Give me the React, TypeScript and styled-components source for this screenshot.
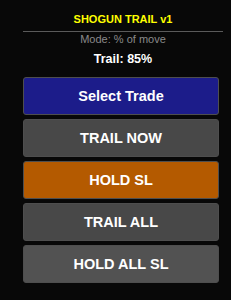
import * as React from 'react'
import styled, { createGlobalStyle } from 'styled-components'

type Tone = 'blue' | 'grey' | 'orange' | 'light'

const tones: Record<Tone, string> = {
  blue: '#1c1c8a',
  grey: '#484848',
  orange: '#b45a00',
  light: '#525252'
}

const buttons: { label: string, tone: Tone }[] = [
  { label: 'Select Trade', tone: 'blue' },
  { label: 'TRAIL NOW', tone: 'grey' },
  { label: 'HOLD SL', tone: 'orange' },
  { label: 'TRAIL ALL', tone: 'grey' },
  { label: 'HOLD ALL SL', tone: 'light' }
]

export default function App () {
  return (
    <>
      <GlobalStyle />
      <Panel>
        <Title>SHOGUN TRAIL v1</Title>
        <Mode>Mode: % of move</Mode>
        <Trail>Trail: 85%</Trail>
        <ButtonList>
          {buttons.map(b => (
            <ActionButton key={b.label} tone={b.tone}>{b.label}</ActionButton>
          ))}
        </ButtonList>
      </Panel>
    </>
  )
}

const GlobalStyle = createGlobalStyle`
  html, body {
    margin: 0;
    padding: 0;
    background: #080808;
  }
  body {
    font-family: "Liberation Sans", Arial, sans-serif;
    width: 231px;
    height: 300px;
    overflow: hidden;
  }
`

const Panel = styled.div`
  width: 200px;
  padding: 12px 0 0 23px;
  display: flex;
  flex-direction: column;
`

const Title = styled.div`
  font-size: 11px;
  line-height: 15px;
  font-weight: bold;
  color: #ffff00;
  text-align: center;
  padding-bottom: 4px;
  border-bottom: 1px solid #5a5a5a;
`

const Mode = styled.div`
  font-size: 11px;
  line-height: 14px;
  color: #8a8a8a;
  text-align: center;
`

const Trail = styled.div`
  margin-top: 5px;
  font-size: 12.5px;
  line-height: 16px;
  font-weight: bold;
  color: #ffffff;
  text-align: center;
`

const ButtonList = styled.div`
  margin-top: 10px;
  width: 196px;
  display: flex;
  flex-direction: column;
  gap: 4px;
`

const ActionButton = styled.button<{ tone: Tone }>`
  height: 38px;
  margin: 0;
  padding: 0;
  box-sizing: border-box;
  border: 1px solid #4e4e4e;
  border-radius: 3px;
  background: ${p => tones[p.tone]};
  color: #ffffff;
  font-family: "Liberation Sans", Arial, sans-serif;
  font-size: 14.5px;
  font-weight: bold;
  text-align: center;
  cursor: pointer;
`
